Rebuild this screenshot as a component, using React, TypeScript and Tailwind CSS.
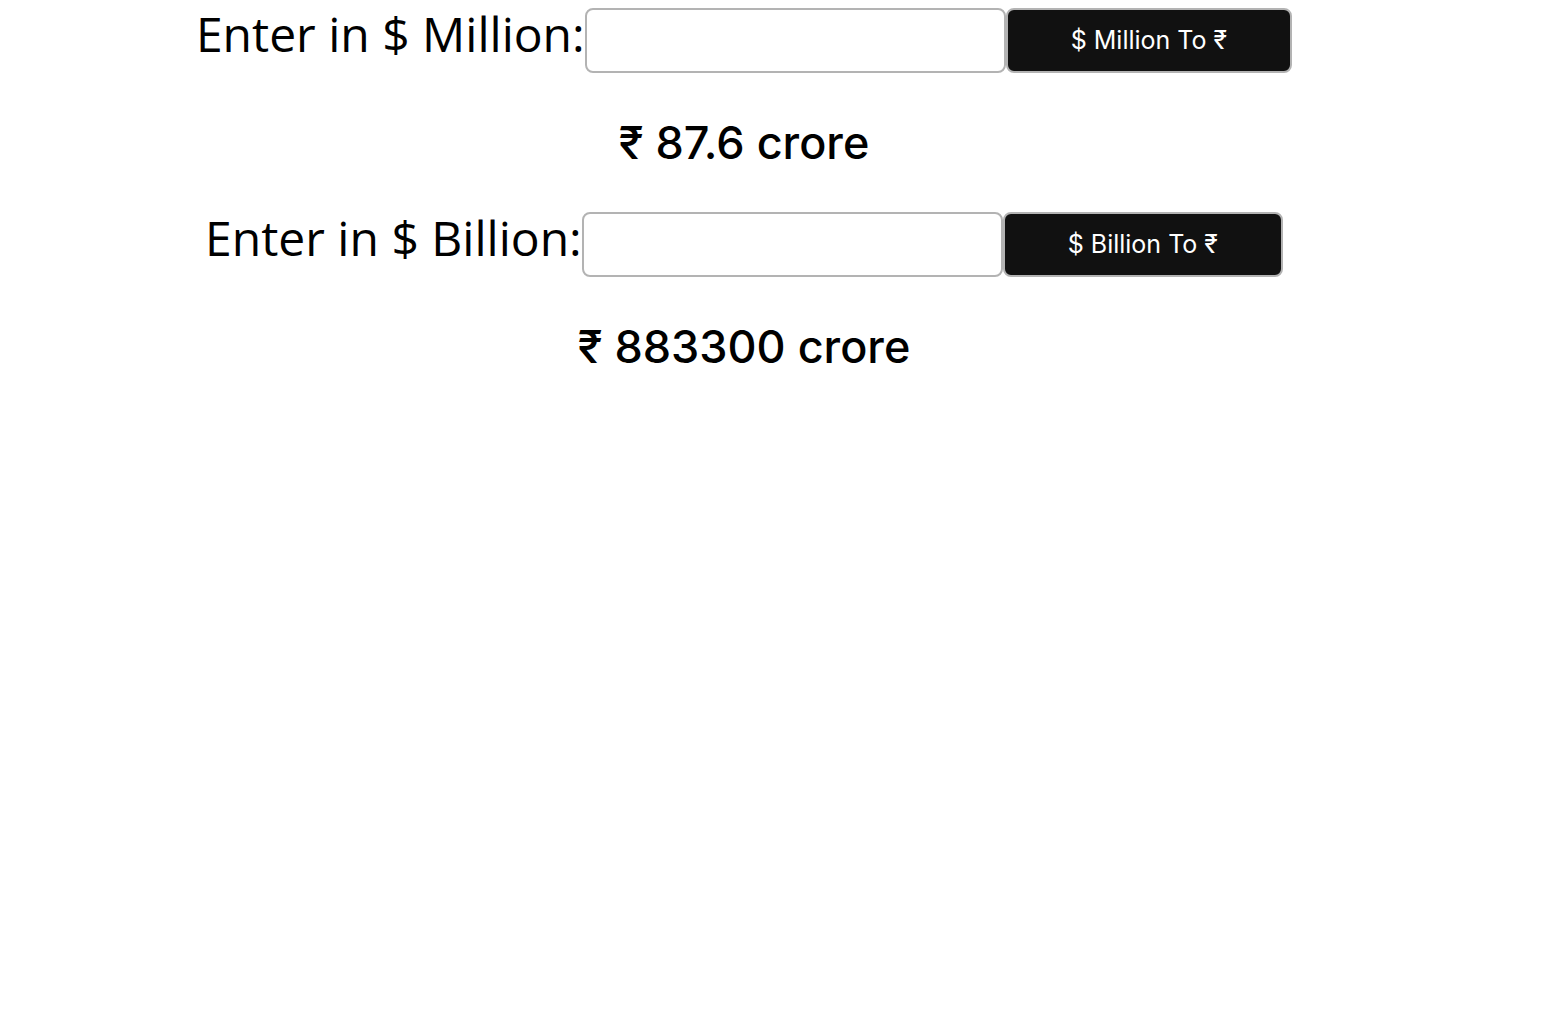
import React, { useState } from "react";

const Converter: React.FC<{
  label: string;
  button: string;
  result: string;
}> = ({ label, button, result }) => {
  const [value, setValue] = useState("");
  return (
    <div className="flex flex-col">
      <div className="flex items-center justify-center">
        <label className="text-[48px] leading-none text-black font-['Open_Sans',sans-serif] -translate-y-[7px]">
          {label}
        </label>
        <input
          type="text"
          value={value}
          onChange={(e) => setValue(e.target.value)}
          className="w-[421px] h-[65px] border-2 border-[#b3b3b3] rounded-lg bg-white"
        />
        <button
          type="button"
          className="h-[65px] px-[63px] bg-[#111111] text-white text-[25px] border-2 border-[#b3b3b3] rounded-lg font-['Inter',sans-serif]"
        >
          {button}
        </button>
      </div>
      <div className="h-[139px] flex items-center justify-center">
        <h2 className="text-[45px] leading-none font-medium text-black font-['Inter',sans-serif]">
          {result}
        </h2>
      </div>
    </div>
  );
};

const App: React.FC = () => {
  return (
    <div className="w-[1488px] pt-2 bg-white min-h-screen">
      <Converter
        label="Enter in $ Million:"
        button="$ Million To ₹"
        result="₹ 87.6 crore"
      />
      <Converter
        label="Enter in $ Billion:"
        button="$ Billion To ₹"
        result="₹ 883300 crore"
      />
    </div>
  );
};

export default App;
